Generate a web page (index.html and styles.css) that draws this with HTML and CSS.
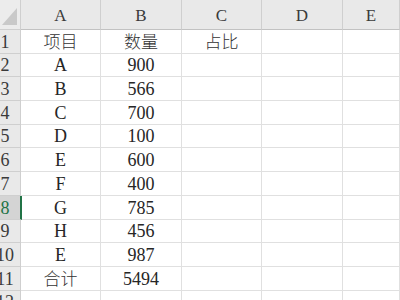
FILE: index.html
```html
<!DOCTYPE html>
<html lang="zh-CN">
<head>
<meta charset="utf-8">
<link rel="stylesheet" href="styles.css">
</head>
<body>
<div class="sheet">
  <div class="hd corner"><svg class="tri" width="15" height="17" viewBox="0 0 15 17"><polygon points="0,17 15,17 15,0" fill="#c9c9c9"/></svg></div>
  <div class="hd col">A</div>
  <div class="hd col">B</div>
  <div class="hd col">C</div>
  <div class="hd col">D</div>
  <div class="hd col">E</div>

  <div class="hd row"><span>1</span></div>
  <div class="c cjk">项目</div><div class="c cjk">数量</div><div class="c cjk">占比</div><div class="c"></div><div class="c"></div>

  <div class="hd row"><span>2</span></div>
  <div class="c">A</div><div class="c">900</div><div class="c"></div><div class="c"></div><div class="c"></div>

  <div class="hd row"><span>3</span></div>
  <div class="c">B</div><div class="c">566</div><div class="c"></div><div class="c"></div><div class="c"></div>

  <div class="hd row"><span>4</span></div>
  <div class="c">C</div><div class="c">700</div><div class="c"></div><div class="c"></div><div class="c"></div>

  <div class="hd row"><span>5</span></div>
  <div class="c">D</div><div class="c">100</div><div class="c"></div><div class="c"></div><div class="c"></div>

  <div class="hd row"><span>6</span></div>
  <div class="c">E</div><div class="c">600</div><div class="c"></div><div class="c"></div><div class="c"></div>

  <div class="hd row"><span>7</span></div>
  <div class="c">F</div><div class="c">400</div><div class="c"></div><div class="c"></div><div class="c"></div>

  <div class="hd row sel"><span>8</span></div>
  <div class="c">G</div><div class="c">785</div><div class="c"></div><div class="c"></div><div class="c"></div>

  <div class="hd row"><span>9</span></div>
  <div class="c">H</div><div class="c">456</div><div class="c"></div><div class="c"></div><div class="c"></div>

  <div class="hd row"><span>10</span></div>
  <div class="c">E</div><div class="c">987</div><div class="c"></div><div class="c"></div><div class="c"></div>

  <div class="hd row"><span>11</span></div>
  <div class="c cjk">合计</div><div class="c">5494</div><div class="c"></div><div class="c"></div><div class="c"></div>

  <div class="hd row"><span>12</span></div>
  <div class="c"></div><div class="c"></div><div class="c"></div><div class="c"></div><div class="c"></div>
</div>
</body>
</html>
```
FILE: styles.css
```css
html, body {
  margin: 0;
  padding: 0;
  background: #ffffff;
  overflow: hidden;
}
.sheet {
  display: grid;
  grid-template-columns: 21px 80px 81px 80px 81px 1fr;
  grid-template-rows: 30px repeat(12, 23.7px);
  width: 400px;
  font-family: "Liberation Serif", "Noto Sans CJK SC", serif;
  font-size: 18px;
  color: #262626;
}
.hd {
  background: #e9e9e9;
  border-right: 1px solid #cfcfcf;
  border-bottom: 1px solid #cfcfcf;
  color: #3a3a3a;
  display: flex;
  justify-content: center;
  overflow: hidden;
}
.corner {
  align-items: flex-end;
  justify-content: flex-end;
  padding: 0 3px 4px 0;
  background: #ececec;
}
.tri { display: block; }
.col {
  align-items: center;
  font-size: 17px;
  line-height: 20px;
  padding-top: 2px;
  border-bottom-color: #c2c2c2;
}
.col:last-child { border-right: none; }
.row {
  align-items: flex-end;
  padding-right: 10px;
  line-height: 20px;
  padding-bottom: 1px;
}
.row span { white-space: nowrap; }
.row.sel {
  background: #d4d4d4;
  color: #217346;
  border-right: 2px solid #217346;
  margin-right: -1px;
  position: relative;
}
.c {
  border-right: 1px solid #e0e0e0;
  border-bottom: 1px solid #e0e0e0;
  display: flex;
  justify-content: center;
  align-items: flex-end;
  line-height: 20px;
  padding-bottom: 1px;
  white-space: nowrap;
}
.cjk {
  font-family: "Noto Sans CJK SC", sans-serif;
  font-weight: 300;
  font-size: 17px;
  line-height: 22px;
  color: #333333;
}
```
